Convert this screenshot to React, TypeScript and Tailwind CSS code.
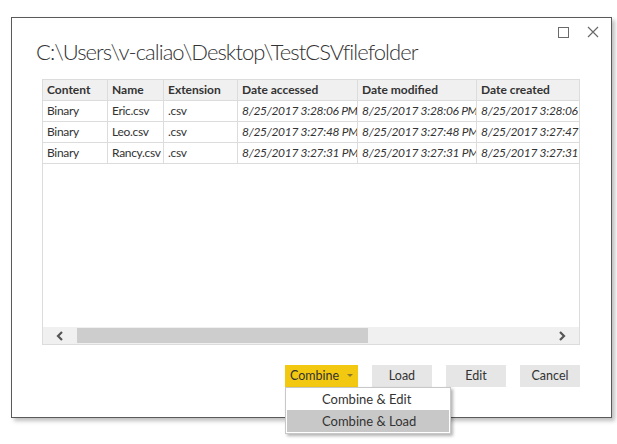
import React from "react";

const cols = [
  { label: "Content", w: 65 },
  { label: "Name", w: 56 },
  { label: "Extension", w: 74 },
  { label: "Date accessed", w: 120 },
  { label: "Date modified", w: 119 },
  { label: "Date created", w: 120 },
];

const rows = [
  ["Binary", "Eric.csv", ".csv", "8/25/2017 3:28:06 PM", "8/25/2017 3:28:06 PM", "8/25/2017 3:28:06 PM"],
  ["Binary", "Leo.csv", ".csv", "8/25/2017 3:27:48 PM", "8/25/2017 3:27:48 PM", "8/25/2017 3:27:47 PM"],
  ["Binary", "Rancy.csv", ".csv", "8/25/2017 3:27:31 PM", "8/25/2017 3:27:31 PM", "8/25/2017 3:27:31 PM"],
];

export default function App() {
  return (
    <div
      className="w-[617px] h-[444px] bg-white overflow-hidden pt-[17px] pl-[11px]"
      style={{ fontFamily: 'Lato, "Noto Sans", sans-serif' }}
    >
      <div className="relative w-[601px] h-[401px] bg-white border border-[#5a5a5a] shadow-[3px_3px_4px_rgba(0,0,0,0.25)]">
        {/* window controls */}
        <div className="absolute right-[12px] top-[8px] flex items-center gap-[18px]">
          <div className="w-[11px] h-[11px] border border-[#6a6a6a]" />
          <svg width="12" height="12" viewBox="0 0 12 12">
            <path d="M1 1 L11 11 M11 1 L1 11" stroke="#6a6a6a" strokeWidth="1.2" />
          </svg>
        </div>

        <div className="pl-[24px] pt-[20px]">
          <div className="text-[22px] leading-[28px] text-[#333] font-light whitespace-nowrap tracking-[-0.95px]">
            C:\Users\v-caliao\Desktop\TestCSVfilefolder
          </div>
        </div>

        {/* table area */}
        <div className="ml-[30px] mt-[13px] w-[538px] h-[266px] border border-[#dcdcdc] flex flex-col">
          <div className="flex-1 overflow-hidden">
            <div className="flex w-[800px] bg-[#f0f0f0] border-b border-[#dcdcdc] h-[21px]">
              {cols.map((c) => (
                <div
                  key={c.label}
                  className="shrink-0 border-r border-[#dcdcdc] pl-[4px] text-[12px] leading-[20px] font-bold text-[#333] whitespace-nowrap overflow-hidden"
                  style={{ width: c.w }}
                >
                  {c.label}
                </div>
              ))}
            </div>
            {rows.map((r, i) => (
              <div key={i} className="flex w-[800px] border-b border-[#dcdcdc] h-[21px]">
                {r.map((cell, j) => (
                  <div
                    key={j}
                    className={`shrink-0 border-r border-[#dcdcdc] pl-[4px] text-[12px] leading-[20px] text-[#333] whitespace-nowrap overflow-hidden tracking-[-0.3px] ${
                      j >= 3 ? "italic" : ""
                    }`}
                    style={{ width: cols[j].w }}
                  >
                    {cell}
                  </div>
                ))}
              </div>
            ))}
          </div>
          {/* horizontal scrollbar */}
          <div className="h-[17px] bg-[#f0f0f0] flex items-center">
            <div className="w-[34px] h-full flex items-center justify-center">
              <svg width="10" height="10" viewBox="0 0 10 10">
                <path d="M7 1 L3 5 L7 9" stroke="#555" strokeWidth="2.2" fill="none" />
              </svg>
            </div>
            <div className="w-[291px] h-[15px] bg-[#cdcdcd]" />
            <div className="flex-1" />
            <div className="w-[34px] h-full flex items-center justify-center">
              <svg width="10" height="10" viewBox="0 0 10 10">
                <path d="M3 1 L7 5 L3 9" stroke="#555" strokeWidth="2.2" fill="none" />
              </svg>
            </div>
          </div>
        </div>

        {/* buttons */}
        <div className="flex justify-end gap-[14px] pr-[31px] mt-[20px] text-[12.5px] text-[#333]">
          <div className="relative">
            <div className="w-[73px] h-[22px] bg-[#f2c811] flex items-center justify-center gap-[8px]">
              <span>Combine</span>
              <svg width="6" height="4" viewBox="0 0 6 4">
                <path d="M0 0 L6 0 L3 3 Z" fill="#8a7a30" />
              </svg>
            </div>
            <div className="absolute left-0 top-[22px] w-[166px] bg-white border border-[#c8c8c8] shadow-[2px_2px_3px_rgba(0,0,0,0.3)] p-[1px] text-[13px] z-10">
              <div className="h-[21px] leading-[21px] pl-[35px]">Combine &amp; Edit</div>
              <div className="h-[22px] leading-[22px] pl-[35px] bg-[#c8c8c8]">Combine &amp; Load</div>
            </div>
          </div>
          <div className="w-[60px] h-[22px] bg-[#e6e6e6] flex items-center justify-center">Load</div>
          <div className="w-[60px] h-[22px] bg-[#e6e6e6] flex items-center justify-center">Edit</div>
          <div className="w-[60px] h-[22px] bg-[#e6e6e6] flex items-center justify-center">Cancel</div>
        </div>
      </div>
    </div>
  );
}
